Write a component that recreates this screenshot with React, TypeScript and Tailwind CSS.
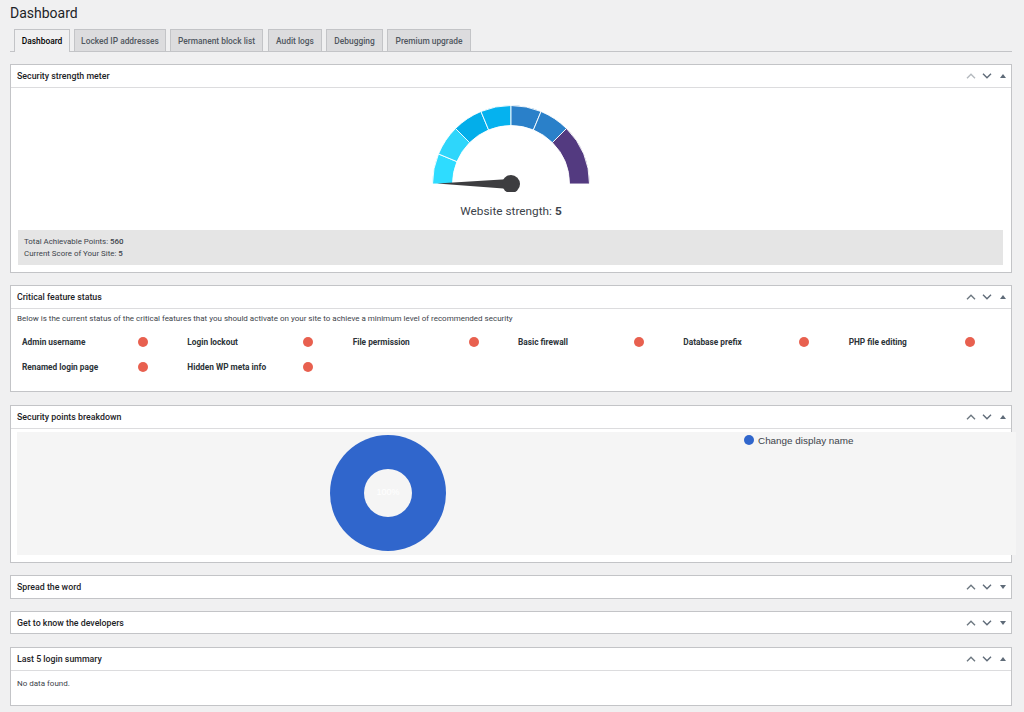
import React from "react";

const FONT = "[font-family:Roboto,'Noto_Sans',sans-serif]";

function arc(a0: number, a1: number, R: number, r: number, cx: number, cy: number) {
  const p = (a: number, q: number) => {
    const t = (a * Math.PI) / 180;
    return `${(cx + q * Math.cos(t)).toFixed(2)} ${(cy - q * Math.sin(t)).toFixed(2)}`;
  };
  return `M${p(a0, R)} A${R} ${R} 0 0 1 ${p(a1, R)} L${p(a1, r)} A${r} ${r} 0 0 0 ${p(a0, r)} Z`;
}

const segs: [number, number, string][] = [
  [180, 157.5, "#2edcff"],
  [157.5, 135, "#2ed6fb"],
  [135, 112.5, "#03aeea"],
  [112.5, 90, "#05b2ef"],
  [90, 67.5, "#2a80c9"],
  [67.5, 45, "#2a80c9"],
  [45, 0, "#533a80"],
];

function Gauge() {
  return (
    <svg width="170" height="92" viewBox="0 0 170 92" className="block">
      {segs.map(([a, b, c], i) => (
        <path key={i} d={arc(a, b, 78.5, 58.5, 85, 84)} fill={c} stroke="#fff" strokeWidth="0.9" />
      ))}
      <path d="M11 83.4 L85 79 L85 89 Z" fill="#3d3d40" />
      <circle cx="85" cy="84" r="9" fill="#3d3d40" />
    </svg>
  );
}

function Controls({ open = true, dim = false }: { open?: boolean; dim?: boolean }) {
  return (
    <div className="flex items-center pr-[5px]">
      <svg width="10" height="6" viewBox="0 0 10 6" fill="none" stroke={dim ? "#b4b9be" : "#6d7780"} strokeWidth="1.4">
        <path d="M1 5.3 L5 1.3 L9 5.3" />
      </svg>
      <svg width="10" height="6" viewBox="0 0 10 6" fill="none" stroke="#5f6b78" strokeWidth="1.4" className="ml-[6px]">
        <path d="M1 .7 L5 4.7 L9 .7" />
      </svg>
      <svg width="6" height="4" viewBox="0 0 6 4" fill="#5f6b78" className="ml-[8px]">
        <path d={open ? "M0 4 L3 0 L6 4 Z" : "M0 0 L6 0 L3 4 Z"} />
      </svg>
    </div>
  );
}

function Panel({
  title,
  open = true,
  dim = false,
  className = "",
  children,
}: {
  title: string;
  open?: boolean;
  dim?: boolean;
  className?: string;
  children?: React.ReactNode;
}) {
  return (
    <section className={`bg-white border border-[#c3c4c7] ${className}`}>
      <div className={`flex items-center justify-between pl-[6px] ${children ? "border-b border-[#dcdcde] h-[23px]" : "h-[22px]"}`}>
        <h2 className="pt-[1px] text-[8.8px] font-medium text-[#1d2327]">{title}</h2>
        <Controls open={open} dim={dim} />
      </div>
      {children}
    </section>
  );
}

const tabs: [string, string][] = [
  ["Locked IP addresses", "w-[92px]"],
  ["Permanent block list", "w-[93px] ml-[4px]"],
  ["Audit logs", "w-[54px] ml-[5px]"],
  ["Debugging", "w-[57px] ml-[4px]"],
  ["Premium upgrade", "w-[84px] ml-[4px]"],
];

const features: string[] = [
  "Admin username",
  "Login lockout",
  "File permission",
  "Basic firewall",
  "Database prefix",
  "PHP file editing",
  "Renamed login page",
  "Hidden WP meta info",
];

export default function App() {
  return (
    <div className={`w-[1024px] h-[712px] overflow-hidden bg-[#f0f0f1] pl-[10px] pr-[12px] ${FONT}`}>
      <h1 className="h-[29px] pt-[3px] text-[14px] leading-[20px] text-[#1d2327]">Dashboard</h1>
      <nav className="flex h-[23px] pl-[4px] border-b border-[#c3c4c7] text-[8.4px] font-medium">
        <div className="w-[56px] h-[23px] mr-[4px] pt-[1px] flex items-center justify-center bg-[#f0f0f1] border border-b-0 border-[#c3c4c7] text-[#000]">
          Dashboard
        </div>
        {tabs.map(([t, w]) => (
          <div key={t} className={`${w} h-[22px] pt-[2px] flex items-center justify-center bg-[#dcdcde] border border-b-0 border-[#c3c4c7] text-[#50575e]`}>
            {t}
          </div>
        ))}
      </nav>

      <Panel title="Security strength meter" dim className="mt-[12px] h-[209px]">
        <div className="flex flex-col items-center pt-[12px]">
          <Gauge />
          <p className="mt-[11px] text-[11.8px] leading-[16px] text-[#3c434a]">
            Website strength: <b className="font-bold">5</b>
          </p>
        </div>
        <div className="mt-[11px] ml-[7px] mr-[8px] h-[35px] bg-[#e5e5e5] px-[6px] py-[6px] text-[7.9px] leading-[11.5px] text-[#3c434a]">
          <div>Total Achievable Points: <span className="font-medium">560</span></div>
          <div>Current Score of Your Site: <span className="font-medium">5</span></div>
        </div>
      </Panel>

      <Panel title="Critical feature status" className="mt-[12px] h-[107px]">
        <p className="pl-[6px] pt-[4px] text-[8px] leading-[12px] text-[#3c434a]">
          Below is the current status of the critical features that you should activate on your site to achieve a minimum level of recommended security
        </p>
        <div className="grid grid-cols-6 w-[1003px] pl-[11px] pt-[4px] auto-rows-[25px]">
          {features.map((f) => (
            <div key={f} className="flex items-center h-[25px]">
              <span className="w-[116px] pt-[1px] text-[8.3px] font-bold text-[#2c3338]">{f}</span>
              <span className="w-[10px] h-[10px] rounded-full bg-[#e8604f]" />
            </div>
          ))}
        </div>
      </Panel>

      <Panel title="Security points breakdown" className="mt-[13px] h-[158px]">
        <div className="mt-[3px] ml-[6px] w-[999px] h-[123px] bg-[#f5f5f5] flex">
          <div className="w-[429px] flex justify-end items-start pt-[3px]">
            <div className="w-[116px] h-[116px] rounded-full bg-[#3066cc] flex items-center justify-center">
              <div className="w-[48px] h-[48px] rounded-full bg-[#f5f5f5] flex items-center justify-center">
                <span className="text-[9px] text-white [font-family:'Liberation_Sans',sans-serif]">100%</span>
              </div>
            </div>
          </div>
          <div className="pt-[3px] pl-[298px] flex items-start gap-[4px] [font-family:'Liberation_Sans',sans-serif] text-[9.9px] leading-[11px] text-[#3c434a]">
            <span className="w-[10px] h-[10px] rounded-full bg-[#3066cc] shrink-0" />
            <span className="whitespace-nowrap">Change display name</span>
          </div>
        </div>
      </Panel>

      <Panel title="Spread the word" open={false} className="mt-[12px] h-[24px]" />
      <Panel title="Get to know the developers" open={false} className="mt-[12px] h-[23px]" />
      <Panel title="Last 5 login summary" className="mt-[13px] h-[59px]">
        <p className="pl-[6px] pt-[7px] text-[8px] leading-[12px] text-[#3c434a]">No data found.</p>
      </Panel>
    </div>
  );
}
